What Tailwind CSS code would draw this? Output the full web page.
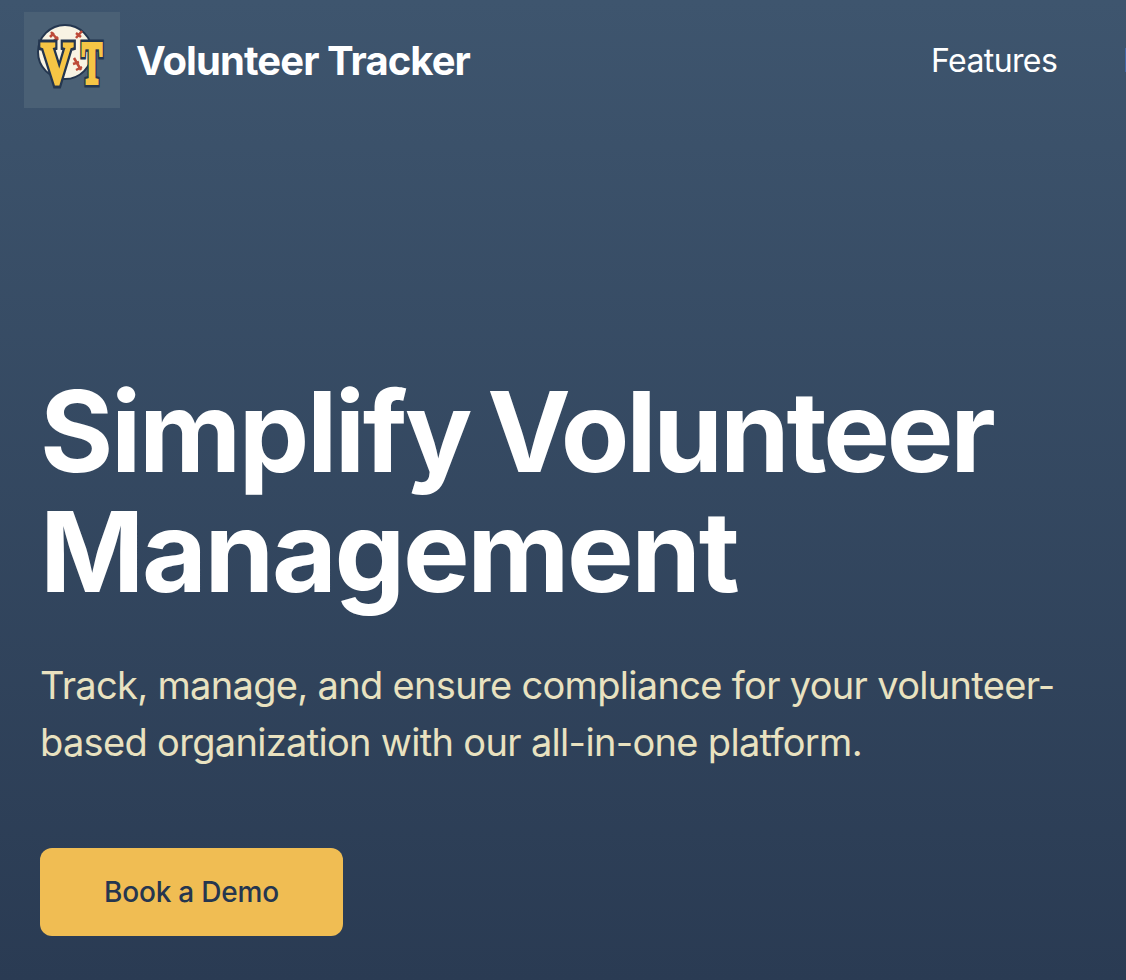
<!DOCTYPE html>
<html lang="en">
  <head>
    <meta charset="UTF-8" />
    <meta name="viewport" content="width=device-width, initial-scale=1.0" />
    <title>Volunteer Tracker</title>
    <script src="https://cdn.jsdelivr.net/npm/@tailwindcss/browser@4"></script>
  </head>
  <body class="m-0 overflow-hidden">
    <div class="h-[980px] w-[1126px] overflow-hidden bg-gradient-to-b from-[#3e556e] to-[#2a3b53] font-['Inter',sans-serif] text-white">
      <nav class="flex h-[120px] items-center whitespace-nowrap pl-6">
        <div class="flex items-center gap-4">
          <div class="h-24 w-24 bg-[#4a6075]">
            <svg viewBox="0 0 96 96" class="h-24 w-24">
              <circle cx="41" cy="40" r="27" fill="#f8f3e3" stroke="#24364f" stroke-width="2" />
              <g fill="none" stroke="#bd4a38" stroke-width="2.5">
                <path d="M27 20l7 8M26 25l4-4M30 29l4-4" />
                <path d="M52 26l6-7M52 21l5 4" />
                <path d="M50 46l7 12M49 52l6-2M52 58l6-3" />
              </g>
              <g font-family="'Liberation Serif', serif" font-weight="700" font-size="60" text-anchor="middle" stroke-linejoin="miter">
                <text transform="translate(33 71) scale(0.74 1)" fill="#24364f" stroke="#24364f" stroke-width="9">V</text>
                <text transform="translate(68 71) scale(0.5 1)" fill="#24364f" stroke="#24364f" stroke-width="9">T</text>
                <text transform="translate(33 71) scale(0.74 1)" fill="#f6c545" stroke="#f6c545" stroke-width="3">V</text>
                <text transform="translate(68 71) scale(0.5 1)" fill="#f6c545" stroke="#f6c545" stroke-width="4">T</text>
              </g>
            </svg>
          </div>
          <span class="pt-0.5 text-[40px] font-bold tracking-[-0.92px]">Volunteer Tracker</span>
        </div>
        <div class="ml-[461px] flex items-center gap-[66px] pt-0.5 text-[32px] tracking-[-0.6px]">
          <a href="#">Features</a>
          <a href="#">Pricing</a>
        </div>
      </nav>
      <section class="px-10 pt-[251px]">
        <h1 class="w-[1046px] text-[112px] leading-[120px] font-bold tracking-[-2.4px] [word-spacing:-7px]">Simplify <span class="tracking-[-3.2px]">Volunteer</span> Management</h1>
        <p class="mt-[46px] w-[1046px] text-[38px] leading-[57px] tracking-[-0.68px] text-[#e9e2c0]">Track, manage, and ensure compliance for your volunteer-based organization with our all-in-one platform.</p>
        <button class="mt-[77px] flex h-[88px] w-[303px] items-center justify-center rounded-xl bg-[#f0bd53] text-[28px] font-medium tracking-[-0.2px] text-[#25364f]">Book a Demo</button>
      </section>
    </div>
  </body>
</html>
